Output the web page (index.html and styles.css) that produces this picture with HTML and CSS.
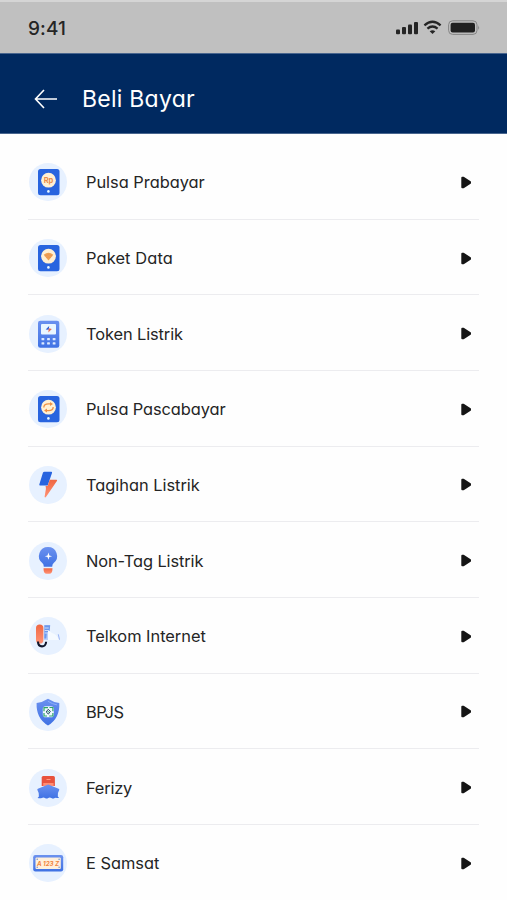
FILE: index.html
```html
<!DOCTYPE html>
<html lang="id">
<head>
<meta charset="utf-8">
<title>Beli Bayar</title>
<link rel="stylesheet" href="styles.css">
</head>
<body>
<div class="status">
  <span class="time">9:41</span>
  <svg class="indicators" width="84" height="16" viewBox="0 0 84 16">
    <g fill="#252525"><rect y="9.5" width="4" height="4.7" rx="1"/><rect x="6" y="7" width="4" height="7.2" rx="1"/><rect x="12" y="4.5" width="4" height="9.7" rx="1"/><rect x="18" y="2" width="4" height="12.2" rx="1"/></g>
    <g fill="none" stroke="#252525" stroke-width="2.3"><path d="M28.4 5.3q8.1-7 16.2 0M31.4 8.7q5.1-4.3 10.2 0"/></g>
    <path d="M33.7 11.3q2.8-2.2 5.6 0l-2.8 2.8z" fill="#252525"/>
    <rect x="52.6" y=".8" width="28.4" height="13.6" rx="4" fill="none" stroke="#858585"/>
    <rect x="54.6" y="2.8" width="24.4" height="9.6" rx="2" fill="#202020"/>
    <path d="M82.2 5.2q1.8 2.4 0 4.8z" fill="#858585"/>
  </svg>
</div>
<header class="bar">
  <svg class="back" width="24" height="20" viewBox="0 0 24 20"><path d="M10 1L1.5 10 10 19M1.5 10H23" fill="none" stroke="#fff" stroke-width="1.6"/></svg>
  <h1>Beli Bayar</h1>
</header>
<svg class="defs" width="0" height="0">
  <defs>
    <linearGradient id="blue" x2="0" y2="1"><stop stop-color="#6b91ef"/><stop offset="1" stop-color="#3f72e4"/></linearGradient>
    <linearGradient id="orange" x2="0" y2="1"><stop stop-color="#ef6742"/><stop offset="1" stop-color="#ff9275"/></linearGradient>
    <g id="phone"><rect x="9" y="6" width="21.5" height="26.3" rx="2.5" fill="#2864df"/><circle cx="19.5" cy="17.2" r="7.4" fill="#fff0d3"/><circle cx="19.4" cy="28.4" r="1.3" fill="#e7f6ff"/></g>
    <path id="play" d="M2.2 1.7L3.6 1.7 10.1 6 10.1 7 3.6 11.3 2.2 11.3z" fill="#151515" stroke="#151515" stroke-width="1.8" stroke-linejoin="round"/>
  </defs>
</svg>
<main>
  <div class="row">
    <svg class="icon" viewBox="0 0 38 38"><circle cx="19" cy="19" r="19"/><use href="#phone"/><text class="rp" x="19.5" y="19.8">Rp</text></svg>
    <span class="label l1">Pulsa Prabayar</span><svg class="play" viewBox="0 0 12 13"><use href="#play"/></svg>
  </div>
  <div class="row">
    <svg class="icon" viewBox="0 0 38 38"><circle cx="19" cy="19" r="19"/><use href="#phone"/><path d="M14.7 15.8q4.8-4 9.6 0l-4.8 5.7z" fill="#efa252"/><path d="M15.8 17q3.7-2.7 7.4 0M17.2 18.7q2.3-1.6 4.6 0" fill="none" stroke="#e58c52" stroke-width=".6"/></svg>
    <span class="label l2">Paket Data</span><svg class="play" viewBox="0 0 12 13"><use href="#play"/></svg>
  </div>
  <div class="row">
    <svg class="icon" viewBox="0 0 38 38"><circle cx="19" cy="19" r="19"/><rect x="9" y="5.7" width="21.3" height="27" rx="2.3" fill="url(#blue)"/><rect x="12" y="9" width="15" height="10.6" rx="1" fill="#eaf6ff"/><path d="M20.2 11l-3.5 3.5 3 .2z" fill="#2859d7"/><path d="M19.8 13.3l3 .8-3.5 3.3z" fill="#f06b4e"/><g fill="#dceaff"><rect x="12.5" y="23" width="2.8" height="2.3" rx=".6"/><rect x="18.1" y="23" width="2.8" height="2.3" rx=".6"/><rect x="23.7" y="23" width="2.8" height="2.3" rx=".6"/><rect x="12.5" y="27.2" width="2.8" height="2.3" rx=".6"/><rect x="18.1" y="27.2" width="2.8" height="2.3" rx=".6"/><rect x="23.7" y="27.2" width="2.8" height="2.3" rx=".6"/></g></svg>
    <span class="label l3">Token Listrik</span><svg class="play" viewBox="0 0 12 13"><use href="#play"/></svg>
  </div>
  <div class="row">
    <svg class="icon" viewBox="0 0 38 38"><circle cx="19" cy="19" r="19"/><use href="#phone"/><g fill="none" stroke="#ef9144" stroke-width="1.3"><path d="M14.8 17.5q0-3.6 4.7-3.6h2M24.2 16.9q0 3.7-4.7 3.7h-2"/></g><path d="M21 12l3 2-3 2zM18 18.5l-3 2 3 2z" fill="#ef9144"/></svg>
    <span class="label l4">Pulsa Pascabayar</span><svg class="play" viewBox="0 0 12 13"><use href="#play"/></svg>
  </div>
  <div class="row">
    <svg class="icon" viewBox="0 0 38 38"><circle cx="19" cy="19" r="19"/><path d="M15.5 5.7h6.6q1.4 0 .9 1.4l-4.3 12.4h-7.6q-1.1 0-.8-1.1l3.6-11.6q.4-1.1 1.6-1.1z" fill="#2864df"/><path d="M20.8 13.7h6.5q1.4 0 .6 1.3L17.3 30.6q-1.4 1.7-1.7.2l1.3-7.8q.1-1.2-.4-2.9h2.1z" fill="url(#orange)"/></svg>
    <span class="label l5">Tagihan Listrik</span><svg class="play" viewBox="0 0 12 13"><use href="#play"/></svg>
  </div>
  <div class="row">
    <svg class="icon" viewBox="0 0 38 38"><circle cx="19" cy="19" r="19"/><path d="M19 5a9 9 0 0 1 5.7 16q-1.5 1.2-1.5 3.7h-8.4q0-2.5-1.5-3.7A9 9 0 0 1 19 5z" fill="url(#blue)"/><path d="M19.5 10.6l.8 2.8 2.8.8-2.8.9-.8 2.7-1-2.7-2.7-.9 2.7-.8z" fill="#fff"/><path d="M14.5 26.2h9q0 5.6-3.3 5.6h-2.5q-3.2 0-3.2-5.6z" fill="url(#orange)"/></svg>
    <span class="label l6">Non-Tag Listrik</span><svg class="play" viewBox="0 0 12 13"><use href="#play"/></svg>
  </div>
  <div class="row">
    <svg class="icon" viewBox="0 0 38 38"><circle cx="19" cy="19" r="19"/><path d="M15 8h6l-1.5 15H15z" fill="#b8cef9"/><path d="M15.5 8.2h5.7l-.6 5.6-2.7 1.6-.6 6h-2z" fill="#6c98ec"/><path d="M15.7 11h4M15.7 13.5h3.5M15.7 16h2.7" stroke="#e4efff" stroke-width=".8"/><path d="M19 13l4 3q5 1.5 7 7h-11z" fill="#f5faff"/><path d="M29.3 17.3l1.2 5.4" stroke="#9bb5f6" stroke-width="1"/><rect x="7" y="7.4" width="7.4" height="19.2" rx="3.7" fill="url(#orange)"/><path d="M9 24.5c0 6.5 8 6.4 8.1.2" fill="none" stroke="#11172d" stroke-width="2.1"/></svg>
    <span class="label l7">Telkom Internet</span><svg class="play" viewBox="0 0 12 13"><use href="#play"/></svg>
  </div>
  <div class="row">
    <svg class="icon" viewBox="0 0 38 38"><circle cx="19" cy="19" r="19"/><path d="M19 5.7q5.7 3.7 11.3 4.3.7 15.5-11.3 22.5Q7 25.5 7.6 10 13.3 9.4 19 5.7z" fill="url(#blue)"/><path d="M19 8.3q4.8 3 9 3.6" fill="none" stroke="#8baef8"/><rect x="13.8" y="13.2" width="11" height="11" rx="2.8" fill="#eef8ff"/><g fill="none" stroke="#2da568" stroke-width="1.2"><path d="M15 18.2v-3.5h4M20.5 14.5h3.4v3.8M23.9 20v3h-3.7M18 23h-3v-3"/></g><path d="M17.2 19l2-2.7 2.2 2-2 2.8z" fill="none" stroke="#304b69"/><circle cx="19.2" cy="18.7" r=".8" fill="#2da568"/></svg>
    <span class="label l8">BPJS</span><svg class="play" viewBox="0 0 12 13"><use href="#play"/></svg>
  </div>
  <div class="row">
    <svg class="icon" viewBox="0 0 38 38"><circle cx="19" cy="19" r="19"/><path d="M14.2 7h10.2q1.5 0 1.5 1.5V17H12.7V8.5Q12.7 7 14.2 7z" fill="#e8523d"/><path d="M14.2 14h10.4v3H14.2z" fill="#ff8d73"/><path d="M17.5 10.5h4" stroke="#ff9983"/><path d="M19.2 15.5l10.4 4.3q1 .5.6 1.3-2 3.4-1.4 6.5 1.1.8 1.1 1.4H28q-1.2-.6-2.3 0-1.7 1-3.3 0-1.6-1-3.2 0t-3.2 0-3.2 0q-1.4.6-4.2 0l1.3-1.5q.5-3.3-1.5-6.5-.4-.8.5-1.2z" fill="url(#blue)"/></svg>
    <span class="label l9">Ferizy</span><svg class="play" viewBox="0 0 12 13"><use href="#play"/></svg>
  </div>
  <div class="row">
    <svg class="icon" viewBox="0 0 38 38"><circle cx="19" cy="19" r="19"/><rect x="4.2" y="11" width="30" height="16.4" rx="2.2" fill="url(#blue)"/><rect x="6.5" y="13.5" width="25.3" height="11.5" rx="1" fill="#fff0dc"/><g fill="#6587c9"><circle cx="8.2" cy="15.2" r=".7"/><circle cx="30.1" cy="15.2" r=".7"/><circle cx="8.2" cy="23.3" r=".7"/><circle cx="30.1" cy="23.3" r=".7"/></g><text class="plate" x="19" y="21.7">A 123 Z</text></svg>
    <span class="label l10">E Samsat</span><svg class="play" viewBox="0 0 12 13"><use href="#play"/></svg>
  </div>
</main>
</body>
</html>
```
FILE: styles.css
```css
* { box-sizing: border-box; }
body {
  margin: 0;
  height: 900px;
  overflow: hidden;
  background: #fefefe;
  color: #252525;
  font-family: Inter, "Open Sans", sans-serif;
  font-feature-settings: "cv11";
}
.status {
  height: 53px;
  padding: 1px 27px 0 28px;
  display: flex;
  align-items: center;
  justify-content: space-between;
  background: #c0c0c0;
  border-top: 2px solid #d5d5d5;
}
.time { font-size: 19px; font-weight: 500; letter-spacing: .1px; }
.bar {
  height: 81px;
  padding: 10px 34px 0;
  display: flex;
  align-items: center;
  background: #002960;
  color: #fff;
  border-top: 1px solid #48658e;
  border-bottom: 1px solid #48658e;
}
.back { margin-right: 24px; }
h1 { margin: 0; font-size: 23px; line-height: 30px; font-weight: 410; letter-spacing: .25px; }
.defs { display: block; }
main { padding: 10.1px 28px 0; }
.row {
  height: 75.65px;
  padding: 2px 7px 0 1px;
  display: flex;
  align-items: center;
  border-bottom: 1px solid #ececef;
}
.icon { width: 38px; height: 38px; flex: none; }
.icon > circle:first-child { fill: #e7f1ff; }
.label {
  flex: 1;
  margin-left: 19px;
  font-size: 16.4px;
  font-weight: 435;
  line-height: 24px;
  letter-spacing: -.02px;
  white-space: nowrap;
}
.l2 { letter-spacing: .12px; }
.l3, .l4, .l6 { letter-spacing: -.1px; }
.l8 { letter-spacing: -.5px; }
.l9 { letter-spacing: -.2px; }
.play { width: 12px; height: 13px; flex: none; }
.rp, .plate { fill: #e98c49; text-anchor: middle; font-weight: 700; }
.rp { font-size: 7.5px; }
.plate { font-size: 6.2px; font-style: italic; fill: #f1843d; }
```
